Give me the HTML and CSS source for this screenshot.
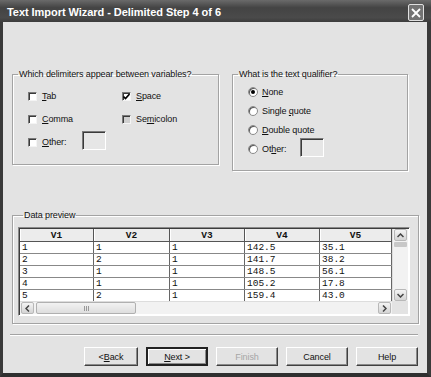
FILE: index.html
```html
<!DOCTYPE html>
<html lang="en">
<head>
    <meta charset="UTF-8">
    <title>Text Import Wizard</title>
    <link rel="stylesheet" href="styles.css">
</head>
<body>
    <div class="window">
        <div class="titlebar">
            <span class="title">Text Import Wizard - Delimited Step 4 of 6</span>
            <div class="close">
                <svg width="10" height="10" viewBox="0 0 10 10"><path d="M1 1 L9 9 M9 1 L1 9" stroke="#fff" stroke-width="1.8"/></svg>
            </div>
        </div>

        <div class="body">
            <div class="groups">
                <fieldset class="group group-delims">
                    <legend>Which delimiters appear between variables?</legend>
                    <div class="delim-grid">
                        <div class="opt"><span class="check"></span><span><u>T</u>ab</span></div>
                        <div class="opt"><span class="check checked"><svg width="7" height="7" viewBox="0 0 7 7"><path d="M0.5 3.5 L2.5 5.5 L6.5 1" stroke="#000" stroke-width="1.6" fill="none"/></svg></span><span><u>S</u>pace</span></div>
                        <div class="opt"><span class="check"></span><span><u>C</u>omma</span></div>
                        <div class="opt"><span class="check grey"></span><span>Se<u>m</u>icolon</span></div>
                        <div class="opt"><span class="check"></span><span class="other-label"><u>O</u>ther:</span><span class="textbox"></span></div>
                    </div>
                </fieldset>

                <fieldset class="group group-qual">
                    <legend>What is the text qualifier?</legend>
                    <div class="qual-list">
                        <div class="opt"><span class="radio on"></span><span><u>N</u>one</span></div>
                        <div class="opt"><span class="radio"></span><span>Single <u>q</u>uote</span></div>
                        <div class="opt"><span class="radio"></span><span><u>D</u>ouble quote</span></div>
                        <div class="opt"><span class="radio"></span><span class="other-label">Ot<u>h</u>er:</span><span class="textbox"></span></div>
                    </div>
                </fieldset>
            </div>

            <fieldset class="group group-preview">
                <legend>Data preview</legend>
                <div class="grid-frame">
                    <div class="viewport">
                        <table class="data">
                            <thead>
                                <tr><th>V1</th><th>V2</th><th>V3</th><th>V4</th><th>V5</th></tr>
                            </thead>
                            <tbody>
                                <tr><td>1</td><td>1</td><td>1</td><td>142.5</td><td>35.1</td></tr>
                                <tr><td>2</td><td>2</td><td>1</td><td>141.7</td><td>38.2</td></tr>
                                <tr><td>3</td><td>1</td><td>1</td><td>148.5</td><td>56.1</td></tr>
                                <tr><td>4</td><td>1</td><td>1</td><td>105.2</td><td>17.8</td></tr>
                                <tr><td>5</td><td>2</td><td>1</td><td>159.4</td><td>43.0</td></tr>
                            </tbody>
                        </table>
                    </div>
                    <div class="vscroll">
                        <div class="sbtn"><svg width="7" height="5" viewBox="0 0 7 5"><path d="M0.5 4 L3.5 1 L6.5 4" stroke="#444" stroke-width="1.5" fill="none"/></svg></div>
                        <div class="vthumb"></div>
                        <div class="vtrack"></div>
                        <div class="sbtn"><svg width="7" height="5" viewBox="0 0 7 5"><path d="M0.5 1 L3.5 4 L6.5 1" stroke="#444" stroke-width="1.5" fill="none"/></svg></div>
                    </div>
                    <div class="hscroll">
                        <div class="sbtn"><svg width="5" height="7" viewBox="0 0 5 7"><path d="M4 0.5 L1 3.5 L4 6.5" stroke="#444" stroke-width="1.5" fill="none"/></svg></div>
                        <div class="hthumb"><span class="grip"></span></div>
                        <div class="htrack"></div>
                        <div class="sbtn"><svg width="5" height="7" viewBox="0 0 5 7"><path d="M1 0.5 L4 3.5 L1 6.5" stroke="#444" stroke-width="1.5" fill="none"/></svg></div>
                    </div>
                    <div class="corner"></div>
                </div>
            </fieldset>

            <div class="separator"></div>

            <div class="buttons">
                <div class="btn btn-back">&lt; <u>B</u>ack</div>
                <div class="btn btn-default"><u>N</u>ext &gt;</div>
                <div class="btn btn-disabled">Finish</div>
                <div class="btn">Cancel</div>
                <div class="btn">Help</div>
            </div>
        </div>
    </div>
</body>
</html>
```

FILE: styles.css
```css
html, body {
    margin: 0;
    padding: 0;
    background: #2e2e2e;
}

.window {
    width: 431px;
    height: 377px;
    box-sizing: border-box;
    background: #e3e3e3;
    border-left: 3px solid #3a3a3a;
    border-right: 4px solid #3a3a3a;
    border-bottom: 4px solid #2f2f2f;
    font: 9px "Liberation Sans", Arial, sans-serif;
    letter-spacing: -0.1px;
    color: #111;
    display: flex;
    flex-direction: column;
}

/* title bar */
.titlebar {
    height: 22px;
    margin: 0 -4px 0 -3px;
    padding: 0 7px 0 7px;
    display: flex;
    align-items: center;
    justify-content: space-between;
    background: linear-gradient(#6a6a6a, #444 35%, #4a4a4a 80%, #3c3c3c);
}
    .titlebar .title {
        color: #fff;
        font: bold 11px "Liberation Sans", Arial, sans-serif;
        letter-spacing: -0.05px;
        margin-top: 1px;
    }
    .titlebar .close {
        width: 14px;
        height: 15px;
        border: 1px solid #e0e0e0;
        border-radius: 2px;
        background: #737373;
        display: flex;
        align-items: center;
        justify-content: center;
        margin-top: 3px;
    }

.body {
    padding: 46px 0 0 9px;
    display: flex;
    flex-direction: column;
}

/* group boxes */
.group {
    margin: 0;
    padding: 0;
    min-width: 0;
    box-sizing: border-box;
    border: 1px solid #a3a3a3;
    box-shadow: 1px 1px 0 #fff, inset 1px 1px 0 #fff;
}
    .group legend {
        margin-left: 5px;
        padding: 0 1px;
        line-height: 12px;
    }

.groups {
    display: flex;
    gap: 13px;
    align-items: flex-start;
}

.group-delims {
    width: 207px;
    height: 97px;
}
    .delim-grid {
        display: grid;
        grid-template-columns: 94px auto;
        grid-auto-rows: 14px;
        row-gap: 9px;
        padding: 9px 0 0 15px;
    }

.group-qual {
    width: 176px;
    height: 103px;
}
    .qual-list {
        display: flex;
        flex-direction: column;
        gap: 5px;
        padding: 5px 0 0 15px;
    }

.opt {
    display: flex;
    align-items: center;
    height: 14px;
    gap: 5px;
}

.check {
    width: 9px;
    height: 9px;
    box-sizing: border-box;
    background: #fff;
    border: 1px solid;
    border-color: #7a7a7a #f4f4f4 #f4f4f4 #7a7a7a;
    box-shadow: inset 1px 1px 0 #3a3a3a;
    display: flex;
    align-items: center;
    justify-content: center;
}
    .check.grey {
        background: #cfcfcf;
    }

.radio {
    width: 10px;
    height: 10px;
    box-sizing: border-box;
    border-radius: 50%;
    background: #fff;
    border: 1px solid #8a8a8a;
    box-shadow: inset 1px 1px 0 #555;
    position: relative;
    margin-right: -1px;
}
    .radio.on::after {
        content: "";
        position: absolute;
        left: 2px; top: 2px;
        width: 4px; height: 4px;
        border-radius: 50%;
        background: #000;
    }

.other-label {
    width: 35px;
}
.group-qual .other-label {
    width: 33px;
}

.textbox {
    width: 24px;
    height: 19px;
    box-sizing: border-box;
    background: #e6e6e6;
    border: 1px solid;
    border-color: #7a7a7a #fff #fff #7a7a7a;
    box-shadow: inset 1px 1px 0 #3a3a3a;
    margin: -4px 0 -1px;
}

/* data preview */
.group-preview {
    width: 407px;
    height: 115px;
    margin-top: 38px;
    padding: 6px 0 0 5px;
}

.grid-frame {
    width: 392px;
    height: 89px;
    box-sizing: border-box;
    border: 1px solid;
    border-color: #8a8a8a #fff #fff #8a8a8a;
    box-shadow: inset 1px 1px 0 #3c3c3c;
    display: grid;
    grid-template-columns: 372px 16px;
    grid-template-rows: 72px 13px;
    padding: 1px 0 0 1px;
    background: #fff;
}

.viewport {
    overflow: hidden;
    background: #fff;
}

.data {
    border-collapse: collapse;
    table-layout: fixed;
    width: 372px;
    letter-spacing: 0;
    font: 9.5px "Liberation Mono", "Courier New", monospace;
}
    .data th {
        height: 12px;
        padding: 0;
        font-weight: bold;
        text-align: center;
        background: #ececec;
        border-right: 1px solid #555;
        border-bottom: 1px solid #555;
        box-shadow: inset 1px 0 0 #fff;
    }
    .data th:first-child { width: 73px; }
    .data th:nth-child(2) { width: 75px; }
    .data th:nth-child(3) { width: 74px; }
    .data th:nth-child(4) { width: 74px; }
    .data td {
        height: 11px;
        padding: 0 2px;
        line-height: 11px;
        border-right: 1px solid #666;
        border-bottom: 1px solid #888;
    }

.vscroll {
    display: flex;
    flex-direction: column;
    background: #f2f2f2;
    border-left: 1px solid #ddd;
}
.hscroll {
    display: flex;
    background: #f2f2f2;
    border-top: 1px solid #ddd;
}
    .sbtn {
        flex: none;
        width: 13px;
        height: 12px;
        box-sizing: border-box;
        margin: 0 1px;
        border: 1px solid #b8b8b8;
        border-radius: 2px;
        background: linear-gradient(#f4f4f4, #d4d4d4);
        display: flex;
        align-items: center;
        justify-content: center;
    }
    .vthumb {
        height: 5px;
        margin: 1px 1px 0;
        background: #c8c8c8;
        border-radius: 1px;
    }
    .vtrack, .htrack {
        flex: 1;
    }
    .hthumb {
        width: 100px;
        margin: 0 1px;
        box-sizing: border-box;
        border: 1px solid #b0b0b0;
        border-radius: 2px;
        background: linear-gradient(#f2f2f2, #dedede);
        display: flex;
        align-items: center;
        justify-content: center;
    }
        .grip {
            width: 5px;
            height: 5px;
            background: repeating-linear-gradient(90deg, #999 0 1px, transparent 1px 2px);
        }
.corner {
    background: #e3e3e3;
}

/* bottom */
.separator {
    margin: 10px 0 0 -2px;
    width: 408px;
    height: 1px;
    background: #a3a3a3;
    border-bottom: 1px solid #fff;
}

.buttons {
    display: flex;
    justify-content: flex-end;
    gap: 8px;
    margin-top: 11px;
    padding-right: 9px;
}
    .btn {
        width: 62px;
        height: 19px;
        box-sizing: border-box;
        border: 1px solid;
        border-color: #fff #404040 #404040 #fff;
        box-shadow: inset -1px -1px 0 #8a8a8a;
        background: #e3e3e3;
        display: flex;
        align-items: center;
        justify-content: center;
    }
    .btn-back {
        width: 54px;
    }
    .btn-default {
        border: 2px solid #222;
        box-shadow: inset 1px 1px 0 #fff, inset -1px -1px 0 #8a8a8a;
    }
    .btn-disabled {
        color: #a6a6a6;
    }
```
